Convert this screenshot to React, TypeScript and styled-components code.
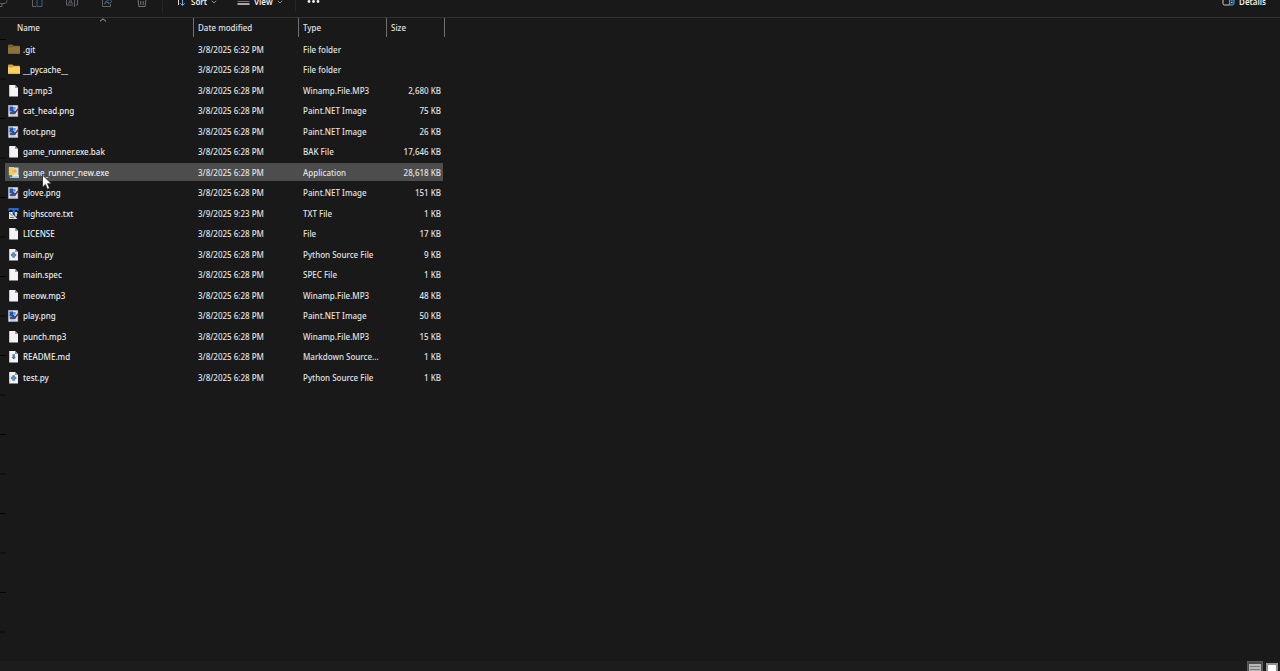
import React from "react";
import styled, { createGlobalStyle, css } from "styled-components";

const GlobalStyle = createGlobalStyle`
  * { box-sizing: border-box; }
  body {
    margin: 0;
    background: #191919;
    overflow: hidden;
  }
  button { font: inherit; color: inherit; }
`;

const Page = styled.div`
  display: flex;
  flex-direction: column;
  height: 100vh;
  overflow: hidden;
  color: #e2e2e2;
  font-family: "Noto Sans", "Open Sans", sans-serif;
  font-size: 8px;
  font-weight: 500;
  line-height: 12px;
  background: #191919;
`;

/* The command bar is scrolled halfway out of the top of the window. */
const Toolbar = styled.header`
  flex: none;
  display: flex;
  align-items: center;
  height: 33px;
  margin-top: -15px;
  padding: 2px 14px 0 0;
  border-bottom: 1px solid #323232;
  font-weight: 600;
`;

const ToolGroup = styled.div`
  display: flex;
  align-items: center;
  gap: 23px;
  width: 163px;
  height: 20px;
  border-right: 1px solid #262626;
  overflow: hidden;
`;

const MenuGroup = styled(ToolGroup)`
  gap: 20px;
  width: 133px;
  padding-left: 12px;
`;

const ToolButton = styled.button<{ $dim?: boolean }>`
  display: flex;
  align-items: center;
  gap: 4px;
  padding: 0;
  border: 0;
  background: none;
  color: #f0f0f0;
  opacity: ${(p) => (p.$dim ? 0.5 : 1)};
  svg { flex: none; display: block; }
`;

const MoreButton = styled(ToolButton)`
  margin-left: 11px;
`;

const DetailsButton = styled(ToolButton)`
  margin-left: auto;
`;

/* Short marks down the left edge, a dark one and a faint one in turn. */
const Content = styled.main`
  flex: 1;
  min-height: 0;
  padding-left: 5px;
  background:
    repeating-linear-gradient(
      #191919 0 21px,
      #040404 21px 22px,
      #191919 22px 60px,
      #111111 60px 62px,
      #191919 62px 79px
    ) 0 0 / 6px 100% no-repeat;
  background-color: #191919;
`;

const FileTable = styled.table`
  table-layout: fixed;
  width: 440px;
  border-collapse: separate;
  border-spacing: 0;
`;

const Col = styled.col<{ $w: number }>`
  width: ${(p) => p.$w}px;
`;

const HeadCell = styled.th<{ $first?: boolean }>`
  position: relative;
  height: 19px;
  padding: 0 0 0 ${(p) => (p.$first ? 12 : 4)}px;
  border-right: 1px solid #707070;
  text-align: left;
  font-weight: 500;
`;

const SortMark = styled.svg`
  position: absolute;
  left: 94px;
  top: 0;
`;

const HeadGap = styled.tr`
  height: 2px;
  td { padding: 0; }
`;

const Cell = styled.td<{ $right?: boolean }>`
  padding: 1px 0 0 4px;
  border: solid transparent;
  border-width: 1px 0 2px;
  background-clip: padding-box;
  white-space: nowrap;
  ${(p) =>
    p.$right &&
    css`
      padding: 1px 2px 0 0;
      border-right-width: 2px;
      text-align: right;
    `}
`;

const Row = styled.tr<{ $active?: boolean }>`
  height: 21px;
  &:nth-child(even) { height: 20px; }
  ${(p) =>
    p.$active &&
    css`
      ${Cell} { background-color: #4d4d4d; }
    `}
`;

const FileName = styled.div`
  position: relative;
  display: flex;
  align-items: center;
  gap: 2px;
  margin-left: -1px;
  color: #ececec;
  svg { flex: none; display: block; }
`;

const Pointer = styled.svg`
  position: absolute;
  left: 33px;
  top: 7px;
  z-index: 1;
`;

const StatusBar = styled.footer`
  flex: none;
  display: flex;
  justify-content: flex-end;
  gap: 2px;
  height: 10px;
  padding-right: 2px;
  background: #1c1c1c;
  overflow: hidden;
`;

const ViewButton = styled.button<{ $on?: boolean }>`
  display: flex;
  justify-content: center;
  width: ${(p) => (p.$on ? 16 : 13)}px;
  height: 16px;
  padding: 2px 0 0;
  border: ${(p) => (p.$on ? "1px solid #5a5a5a" : "0")};
  background: ${(p) => (p.$on ? "#4b4b4b" : "none")};
  svg { flex: none; display: block; }
`;

type Kind = "git" | "folder" | "file" | "image" | "app" | "text" | "py" | "md";

function FileIcon({ kind }: { kind: Kind }) {
  if (kind === "git" || kind === "folder") {
    const dim = kind === "git";
    return (
      <svg width="13" height="12" viewBox="0 0 13 12" aria-hidden="true">
        <path d="M0 1.500q0-1 1-1h3.400l1.400 1.300H11q1 0 1 1V5H0z" fill={dim ? "#7d6127" : "#e0a02c"} />
        <path d="M0 3.500h4.400l1.300-1H11q1 0 1 1v5.600q0 1-1 1H1q-1 0-1-1z" fill={dim ? "#8f733b" : "#fbd265"} />
        <path d="M0 8.700h12v.4q0 1-1 1H1q-1 0-1-1z" fill={dim ? "#7e6431" : "#eeb544"} />
      </svg>
    );
  }
  if (kind === "image") {
    return (
      <svg width="13" height="12" viewBox="0 0 13 12" aria-hidden="true">
        <path d="M.4.3h9.400v11.200H.4z" fill="#dfe5f0" stroke="#a9b0bf" strokeWidth=".6" />
        <path d="M1.500 1.500h3.500v5H1.500z" fill="#1d55c4" />
        <path d="M5 2h2.600v2.600H5z" fill="#5f8fe0" />
        <path d="M5.500 4.600l2 2.400H3.500z" fill="#2c4f96" />
        <path d="M1.500 7.500l3-1 3.500 1.500-1.500 1.300H2z" fill="#42526e" />
        <path d="M10 4L6.500 8.300" stroke="#6e2b36" strokeWidth="1.400" />
        <path d="M2 10.200h6" stroke="#b9c7e2" />
      </svg>
    );
  }
  if (kind === "app") {
    return (
      <svg width="13" height="12" viewBox="0 0 13 12" aria-hidden="true">
        <path d="M4 .5h6.500v8H4z" fill="#cfe0ee" />
        <path d="M.8 0H6v8.500H.8z" fill="#f5cb5a" />
        <path d="M5.500 2.500h3v3.200h-3z" fill="#efae2f" />
        <path d="M2 8.200h9V11H2z" fill="#a7cbe6" />
        <path d="M.8 8.300h3.400v1.900H.8z" fill="#3b7bb8" />
        <path d="M4.500 8.700h6" stroke="#f2f7fb" />
      </svg>
    );
  }
  if (kind === "text") {
    return (
      <svg width="13" height="12" viewBox="0 0 13 12" aria-hidden="true">
        <path d="M1 4h8v7H1z" fill="#dfe4ea" />
        <path d="M.5 0h10.200v3H9.500L8.800 2H7v4H4.600V2H2.500l-.8 1H.5z" fill="#2868c8" />
        <path d="M1.500 5l3 3M2 9.500h4" stroke="#6a7280" />
        <path d="M5 5.500l5.300 5.500" stroke="#1f2f6a" strokeWidth="1.300" />
        <path d="M9.400 5L6.500 9" stroke="#efb65c" strokeWidth="1.200" />
      </svg>
    );
  }
  return (
    <svg width="13" height="12" viewBox="0 0 13 12" aria-hidden="true">
      <path d="M1.200 0h5.800L10 3v8.500H1.200z" fill="#f4f2f6" />
      <path d="M7 0v3h3z" fill="#98989c" />
      {kind === "py" && (
        <>
          <path d="M4.300 3.300h2.600v5.400H4.300zM2.900 4.700h5.400v2.600H2.900z" fill="#4f86b4" />
          <circle cx="5.600" cy="6" r="1.100" fill="#7395ae" />
        </>
      )}
      {kind === "md" && <path d="M4.600 3.300h2.200V5.900h1.100L5.700 8.600 3.500 5.900h1.100z" fill="#3f78a8" />}
    </svg>
  );
}

function Caret() {
  return (
    <svg width="6" height="4" viewBox="0 0 6 4" fill="none" stroke="#8c8c8c" aria-hidden="true">
      <path d="M.8.8L3 3 5.200.8" />
    </svg>
  );
}

const FILES: { name: string; kind: Kind; date: string; type: string; size: string; active?: boolean }[] = [
  { name: ".git", kind: "git", date: "3/8/2025 6:32 PM", type: "File folder", size: "" },
  { name: "__pycache__", kind: "folder", date: "3/8/2025 6:28 PM", type: "File folder", size: "" },
  { name: "bg.mp3", kind: "file", date: "3/8/2025 6:28 PM", type: "Winamp.File.MP3", size: "2,680 KB" },
  { name: "cat_head.png", kind: "image", date: "3/8/2025 6:28 PM", type: "Paint.NET Image", size: "75 KB" },
  { name: "foot.png", kind: "image", date: "3/8/2025 6:28 PM", type: "Paint.NET Image", size: "26 KB" },
  { name: "game_runner.exe.bak", kind: "file", date: "3/8/2025 6:28 PM", type: "BAK File", size: "17,646 KB" },
  { name: "game_runner_new.exe", kind: "app", date: "3/8/2025 6:28 PM", type: "Application", size: "28,618 KB", active: true },
  { name: "glove.png", kind: "image", date: "3/8/2025 6:28 PM", type: "Paint.NET Image", size: "151 KB" },
  { name: "highscore.txt", kind: "text", date: "3/9/2025 9:23 PM", type: "TXT File", size: "1 KB" },
  { name: "LICENSE", kind: "file", date: "3/8/2025 6:28 PM", type: "File", size: "17 KB" },
  { name: "main.py", kind: "py", date: "3/8/2025 6:28 PM", type: "Python Source File", size: "9 KB" },
  { name: "main.spec", kind: "file", date: "3/8/2025 6:28 PM", type: "SPEC File", size: "1 KB" },
  { name: "meow.mp3", kind: "file", date: "3/8/2025 6:28 PM", type: "Winamp.File.MP3", size: "48 KB" },
  { name: "play.png", kind: "image", date: "3/8/2025 6:28 PM", type: "Paint.NET Image", size: "50 KB" },
  { name: "punch.mp3", kind: "file", date: "3/8/2025 6:28 PM", type: "Winamp.File.MP3", size: "15 KB" },
  { name: "README.md", kind: "md", date: "3/8/2025 6:28 PM", type: "Markdown Source...", size: "1 KB" },
  { name: "test.py", kind: "py", date: "3/8/2025 6:28 PM", type: "Python Source File", size: "1 KB" },
];

const ICON = { width: 12, height: 12, viewBox: "0 0 12 12", fill: "none", "aria-hidden": true } as const;

export default function App() {
  return (
    <>
      <GlobalStyle />
      <Page>
        <Toolbar>
          <ToolGroup>
            <ToolButton $dim aria-label="Copy">
              <svg width="8" height="12" viewBox="0 0 8 12" fill="none" aria-hidden="true">
                <path d="M0 7.500h4q3 0 3-3V1" stroke="#6fa8e0" />
                <path d="M0 10.500h2V7.500" stroke="#aaa" />
              </svg>
            </ToolButton>
            <ToolButton $dim aria-label="Paste">
              <svg {...ICON}>
                <path d="M5 10.500H1.500V1" stroke="#aaa" />
                <path d="M6 1v9.500h5V1" stroke="#6fa8e0" />
              </svg>
            </ToolButton>
            <ToolButton $dim aria-label="Rename">
              <svg {...ICON}>
                <path d="M7 2H.5v7H7M10 2h1.500v7H10M8.500 0v11" stroke="#aaa" />
                <path d="M2.500 8l2-5 2 5M3.300 6.500h2.400" stroke="#6fa8e0" />
              </svg>
            </ToolButton>
            <ToolButton $dim aria-label="Share">
              <svg {...ICON}>
                <path d="M4 1.500H1.500v9h8V8" stroke="#aaa" />
                <path d="M3.500 8q.5-3.500 4-3.500V2.500L11 5.500 7.500 8V6.300q-2.500 0-4 1.700z" stroke="#6fa8e0" />
              </svg>
            </ToolButton>
            <ToolButton $dim aria-label="Delete">
              <svg {...ICON}>
                <path d="M1 2.500h10M2 2.500l.8 8h6.400l.8-8M4.800 5v4M7.200 5v4" stroke="#ccc" />
              </svg>
            </ToolButton>
          </ToolGroup>
          <MenuGroup>
            <ToolButton>
              <svg {...ICON}>
                <path d="M3.500 9V2M1.500 4l2-2 2 2" stroke="#ddd" />
                <path d="M7.500 2v7.500M5.300 7.300l2.200 2.200 2.200-2.200" stroke="#64b0e8" />
              </svg>
              Sort
              <Caret />
            </ToolButton>
            <ToolButton>
              <svg {...ICON} width="13">
                <path d="M0 2.500h12M0 5.500h12" stroke="#777" />
                <path d="M0 8h12" stroke="#a8a8a8" strokeWidth="2" />
              </svg>
              View
              <Caret />
            </ToolButton>
          </MenuGroup>
          <MoreButton aria-label="See more">
            <svg width="13" height="4" viewBox="0 0 13 4" fill="#f0f0f0" aria-hidden="true">
              <circle cx="2" cy="1.500" r="1.400" />
              <circle cx="6.500" cy="1.500" r="1.400" />
              <circle cx="11" cy="1.500" r="1.400" />
            </svg>
          </MoreButton>
          <DetailsButton>
            <svg {...ICON} width="13">
              <path d="M7 .5H2Q.5.500.5 2v5.500Q.5 9 2 9h5" stroke="#ccc" />
              <path d="M7 .5h3q1.500 0 1.500 1.500v5.500Q11.500 9 10 9H7z" fill="#17456b" stroke="#5a9bd0" />
              <path d="M8.500 4H10M8.500 6.500H10" stroke="#8cc4f0" />
            </svg>
            Details
          </DetailsButton>
        </Toolbar>

        <Content>
          <FileTable>
            <colgroup>
              <Col $w={189} />
              <Col $w={105} />
              <Col $w={88} />
              <Col $w={58} />
            </colgroup>
            <thead>
              <tr>
                <HeadCell $first scope="col" aria-sort="ascending">
                  Name
                  <SortMark width="8" height="4" viewBox="0 0 8 4" fill="none" stroke="#a8a8a8" aria-hidden="true">
                    <path d="M1 3.300l3-2.500 3 2.500" />
                  </SortMark>
                </HeadCell>
                <HeadCell scope="col">Date modified</HeadCell>
                <HeadCell scope="col">Type</HeadCell>
                <HeadCell scope="col">Size</HeadCell>
              </tr>
              <HeadGap aria-hidden="true">
                <td colSpan={4} />
              </HeadGap>
            </thead>
            <tbody>
              {FILES.map((f) => (
                <Row key={f.name} $active={f.active}>
                  <Cell>
                    <FileName>
                      <FileIcon kind={f.kind} />
                      {f.name}
                      {f.active && (
                        <Pointer width="12" height="17" viewBox="0 0 12 17" aria-hidden="true">
                          <path
                            d="M1.500 1v12.200l2.900-2.700 2 4.700 2.200-1-2-4.500h3.900z"
                            fill="#fff"
                            stroke="#222"
                            strokeWidth=".8"
                          />
                        </Pointer>
                      )}
                    </FileName>
                  </Cell>
                  <Cell>{f.date}</Cell>
                  <Cell>{f.type}</Cell>
                  <Cell $right>{f.size}</Cell>
                </Row>
              ))}
            </tbody>
          </FileTable>
        </Content>

        <StatusBar>
          <ViewButton $on aria-label="Details view">
            <svg width="12" height="10" viewBox="0 0 12 10" aria-hidden="true">
              <path d="M0 0h12v10H0z" fill="#b9b9b9" />
              <path d="M1 2.500h10M1 5.500h10M1 8.500h10" stroke="#777" />
            </svg>
          </ViewButton>
          <ViewButton aria-label="Large icons view">
            <svg width="12" height="10" viewBox="0 0 12 10" aria-hidden="true">
              <path d="M0 0h12v10H0z" fill="#8f8f94" />
              <path d="M2 2h8v8H2z" fill="#fff" />
            </svg>
          </ViewButton>
        </StatusBar>
      </Page>
    </>
  );
}
